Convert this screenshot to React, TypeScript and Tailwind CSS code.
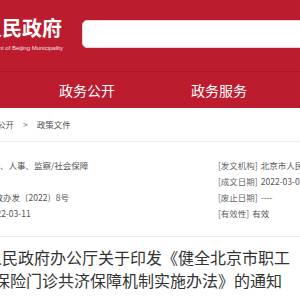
export default function App() {
  const rows = [
    { left: '劳动、人事、监察/社会保障', leftOffset: 'ml-[-17px]', label: '[发文机构]', value: '北京市人民政府' },
    { left: '', leftOffset: '', label: '[成文日期]', value: '2022-03-07' },
    { left: '京政办发〔2022〕8号', leftOffset: 'ml-[-14px]', label: '[废止日期]', value: '----' },
    { left: '2022-03-11', leftOffset: 'ml-[-13px]', label: '[有效性]', value: '有效' },
  ];

  return (
    <div className="w-[300px] h-[300px] overflow-hidden bg-white font-['Noto_Sans_CJK_SC','Noto_Sans',sans-serif]">
      {/* header */}
      <div className="bg-[#bd1b2e]">
        <div className="h-[71px] flex items-start">
          <div className="ml-[-78px] mt-[16px] w-[141px] shrink-0">
            <div className="text-[20px] leading-[24px] font-bold text-white whitespace-nowrap">北京市人民政府</div>
            <div className="mt-[4px] text-right text-[6px] leading-[8px] text-white/85 whitespace-nowrap font-['Liberation_Sans',sans-serif]">
              The People's Government of Beijing Municipality
            </div>
          </div>
          <div className="ml-[19px] mt-[20px] h-[28px] flex-1 mr-[-20px] rounded-[5px] bg-white border border-[#f3d0d4]" />
        </div>
        <div className="h-px bg-[#a5172a]" />
        <div className="h-[36px] flex items-center text-white text-[14px] leading-none whitespace-nowrap">
          <span className="ml-[59px]">政务公开</span>
          <span className="ml-[76px]">政务服务</span>
        </div>
      </div>

      {/* breadcrumb */}
      <div className="h-[34px] border-b border-[#ececec] flex items-center text-[8.5px] text-[#555] whitespace-nowrap">
        <span className="ml-[-20px]">政务公开</span>
        <span className="mx-[9px] text-[#777]">&gt;</span>
        <span>政策文件</span>
      </div>

      {/* info */}
      <div className="border-b border-[#ececec] py-[15px]">
        {rows.map((r) => (
          <div key={r.label} className="h-[16px] flex items-center text-[8.5px] text-[#555] whitespace-nowrap">
            <div className="w-[218px] shrink-0 overflow-hidden">
              {r.left && <span className={`block ${r.leftOffset}`}>{r.left}</span>}
            </div>
            <div className="flex gap-[3px]">
              <span className="text-[#666]">{r.label}</span>
              <span>{r.value}</span>
            </div>
          </div>
        ))}
      </div>

      {/* title */}
      <div className="mt-[9px] text-[16px] leading-[23px] text-[#333] whitespace-nowrap">
        <div className="ml-[-62px]">北京市人民政府办公厅关于印发《健全北京市职工</div>
        <div className="ml-[-70px]">基本医疗保险门诊共济保障机制实施办法》的通知</div>
      </div>
    </div>
  );
}
